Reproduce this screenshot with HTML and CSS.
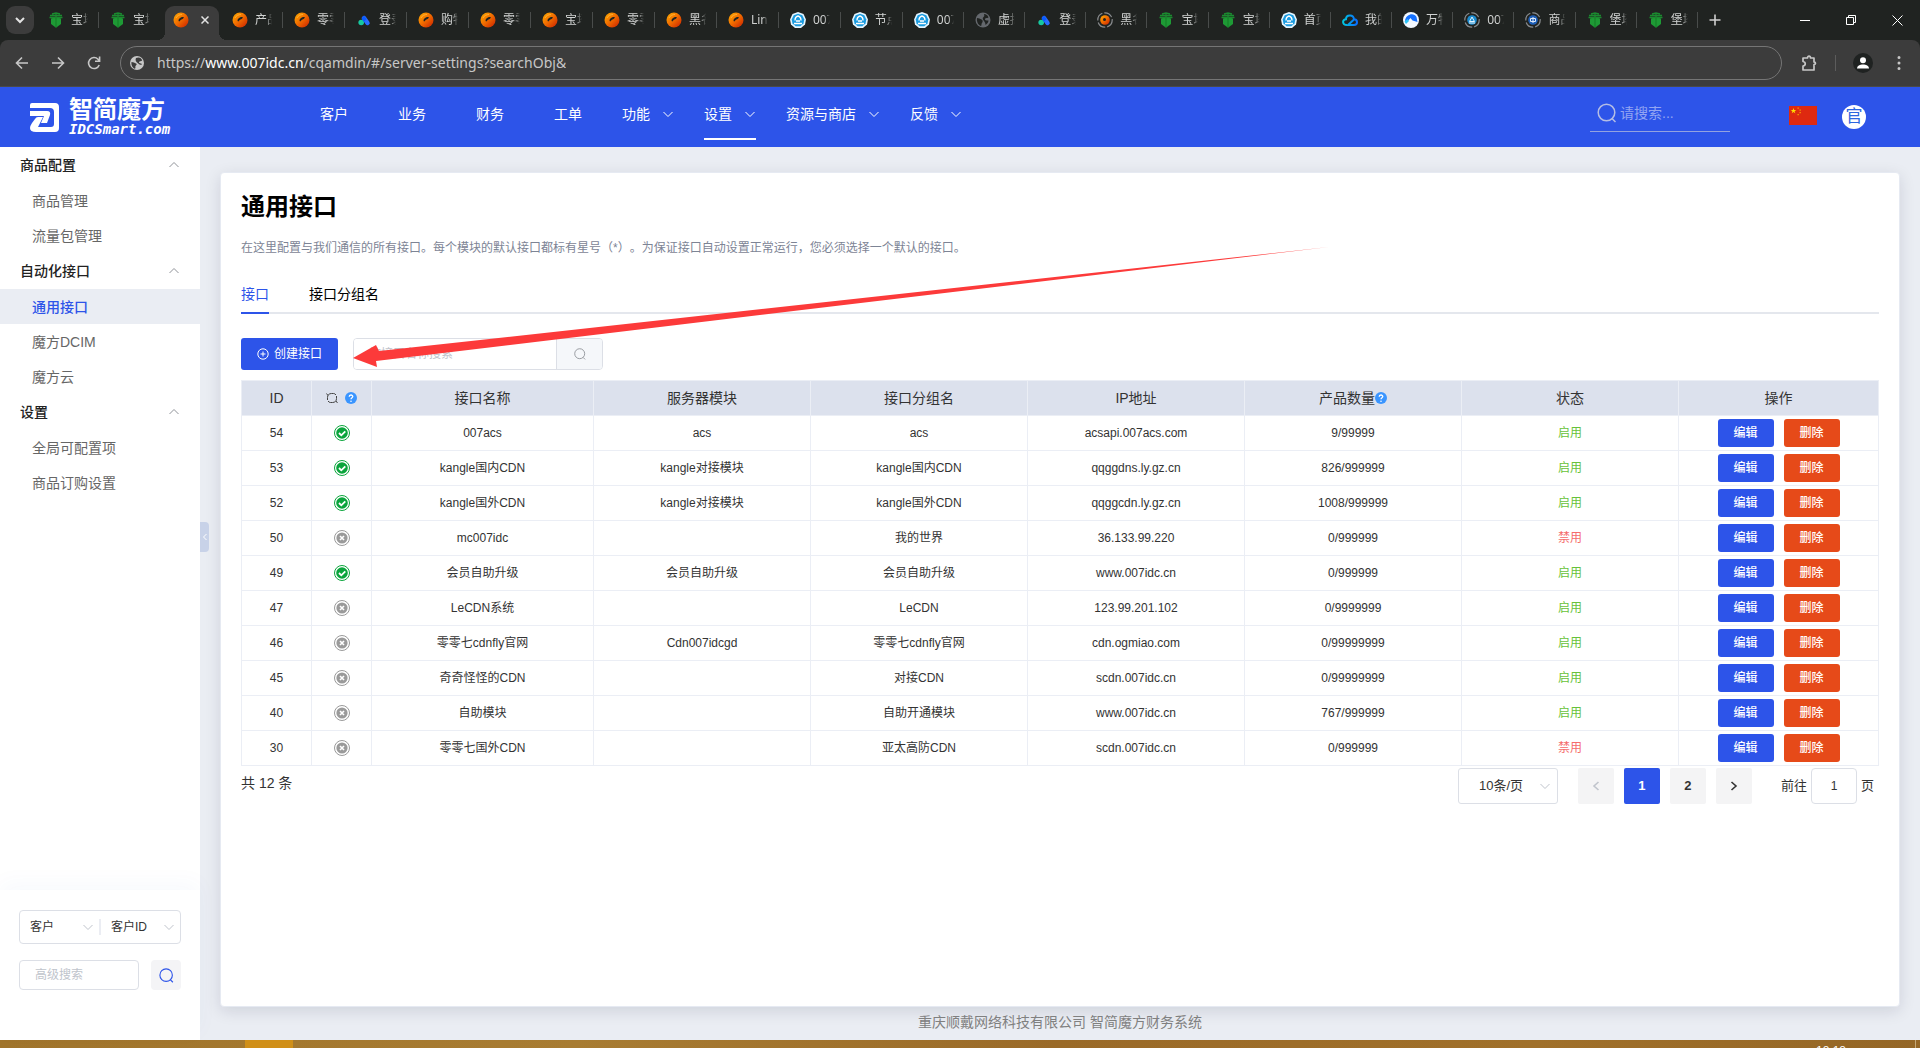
FILE: index.html
```html
<!DOCTYPE html>
<html lang="zh-CN">
<head>
<meta charset="utf-8">
<title>通用接口</title>
<link rel="stylesheet" href="styles.css">
</head>
<body>
<svg class="defs" aria-hidden="true">
  <defs>
    <linearGradient id="g-orange" x1="0" y1="0" x2="1" y2="1"><stop offset="0" stop-color="#ffb000"/><stop offset=".5" stop-color="#f06a00"/><stop offset="1" stop-color="#c81e00"/></linearGradient>
    <linearGradient id="g-cloud" x1="0" y1="0" x2="1" y2="0"><stop offset="0" stop-color="#00c8e0"/><stop offset="1" stop-color="#0a6cff"/></linearGradient>
  </defs>
  <symbol id="f-bt" viewBox="0 0 16 16"><path fill="#1e9a35" d="M3 6.500 8 5l5 1.500v5.500L8 15.800 3 12z"/><path fill="none" stroke="#1b8a30" stroke-width="1.300" d="M2 3.500h12M1.500 5.500h13M4 2l4-1 4 1M8 1v5"/><path fill="#147a26" d="M7.500 5.500h1v10h-1z"/></symbol>
  <symbol id="f-or" viewBox="0 0 16 16"><circle cx="8" cy="8" r="7.500" fill="url(#g-orange)"/><path fill="#202321" d="M5.500 8.500c0-2 3-4 5-3.500 1 .5-.5 2-2 2.500S7 9.500 6 9.500z"/><path fill="none" stroke="#ffb640" stroke-width=".8" d="M3 6c1-2.500 4-3.500 6-3.500"/></symbol>
  <symbol id="f-tri" viewBox="0 0 16 16"><path stroke="#2a6cff" stroke-width="4.500" stroke-linecap="round" d="M8 6l3.500 5"/><circle cx="5.200" cy="10.500" r="2.800" fill="#16c8a0"/><path fill="#0a5cff" d="M5.500 6.500 8 3.500l2.500 3.500L8 10z"/></symbol>
  <symbol id="f-hex" viewBox="0 0 16 16"><path fill="#e4f5ff" d="M8 0l5.500 2L16 7.500l-1 5L11 16H5l-4-3.500-1-5L2.500 2z"/><path fill="#1a9be0" d="M8 1.800l4.300 1.500 2 4.300-.8 3.900-3.200 2.800H5.700l-3.200-2.800-.8-3.900 2-4.300z"/><path fill="none" stroke="#fff" stroke-width="1.400" d="M5 8.500c0-2.500 1-4 3-4.500 2 .5 3 2 3 4.500M4 11.500h8M6 9h4"/></symbol>
  <symbol id="f-globe" viewBox="0 0 16 16"><circle cx="8" cy="8" r="7.500" fill="#64686d"/><path fill="#202321" d="M2 6c2 0 3 1 4.500 1.500S8 10 7 11s0 2-1 3C3 13 1.500 9.500 2 6zM9 2c2 0 4 1.500 4.500 3.500-1.500 1-3 0-3.500 1.500s2 1.500 3.500 1.500c0 2-2 4-3 4.500 0-1-.5-3-1.500-4S7 6 8.500 5 9 3 9 2z"/></symbol>
  <symbol id="f-ringo" viewBox="0 0 16 16"><circle cx="8" cy="8" r="7.200" fill="none" stroke="#8a8d90" stroke-width="1.200" stroke-dasharray="9 2"/><circle cx="8" cy="8" r="4.800" fill="url(#g-orange)"/><circle cx="7.500" cy="7.500" r="1.500" fill="#202321"/></symbol>
  <symbol id="f-cloud" viewBox="0 0 16 16"><path fill="none" stroke="url(#g-cloud)" stroke-width="2" d="M5 13C0 13 0 7.500 4 7.300 4 2.500 11.500 2 12 7.300c4 .2 4 5.700 0 5.700H6l6-5.500"/></symbol>
  <symbol id="f-peak" viewBox="0 0 16 16"><circle cx="8" cy="8" r="8" fill="#f2f8ff"/><path fill="#1470ff" d="M2 8.500C3 2 11 0 13.500 5l1 5-5-1.500L7.500 6 4 10z"/><path fill="#2bc4f5" d="M1.500 9.500 4.500 7 6 9l-3 3z"/></symbol>
  <symbol id="f-ringb" viewBox="0 0 16 16"><circle cx="8" cy="8" r="7.200" fill="none" stroke="#8a8d90" stroke-width="1.200" stroke-dasharray="9 2"/><circle cx="8" cy="8" r="4.800" fill="#1a8bd0"/><path fill="none" stroke="#e2f4ff" d="M5.500 9.500 8 5l2.500 4.500zM5 11h6"/></symbol>
  <symbol id="f-ringc" viewBox="0 0 16 16"><circle cx="8" cy="8" r="7.200" fill="none" stroke="#8a8d90" stroke-width="1.200" stroke-dasharray="9 2"/><circle cx="8" cy="8" r="4.800" fill="#1d5fb8"/><path fill="none" stroke="#dce9fa" d="M5.500 6.500h5v3h-5zM8 5v6"/></symbol>
  <symbol id="i-down" viewBox="0 0 12 12"><path fill="none" stroke="currentColor" d="M1.500 4 6 8.500 10.500 4"/></symbol>
  <symbol id="i-up" viewBox="0 0 12 12"><path fill="none" stroke="currentColor" d="M1.500 8 6 3.500 10.500 8"/></symbol>
  <symbol id="i-search" viewBox="0 0 20 20"><circle cx="9.500" cy="9.500" r="8.300" fill="none" stroke="currentColor" stroke-width="1.500"/><path stroke="currentColor" stroke-width="1.500" d="m15 15.500 3.500 3.500"/></symbol>
  <symbol id="i-help" viewBox="0 0 12 12"><circle cx="6" cy="6" r="6" fill="#3a95ff"/><path fill="none" stroke="#fff" stroke-width="1.300" d="M4.200 4.800c0-2.400 3.600-2.300 3.600-.2C7.800 5.800 6 5.800 6 7.300"/><circle cx="6" cy="9.200" r=".8" fill="#fff"/></symbol>
  <symbol id="i-ok" viewBox="0 0 16 16"><circle cx="8" cy="8" r="7.500" fill="#fff" stroke="#0aa53c"/><circle cx="8" cy="8" r="5.800" fill="#0aa53c"/><path fill="none" stroke="#fff" stroke-width="1.800" d="m5 8 2.300 2.300 4-4"/></symbol>
  <symbol id="i-no" viewBox="0 0 16 16"><circle cx="8" cy="8" r="7.500" fill="#fff" stroke="#9a9a9a"/><circle cx="8" cy="8" r="5.600" fill="#9a9a9a"/><path stroke="#fff" stroke-width="1.600" d="m6 6 4 4m0-4-4 4"/></symbol>
</svg>

<div class="tabstrip">
  <button class="tab-list" aria-label="搜索标签页"><svg width="10" height="10" viewBox="0 0 10 10"><path fill="none" stroke="#e3e3e3" stroke-width="2" d="m1 3 4 4 4-4"/></svg></button>
  <div class="tabs">
    <button class="tab"><svg><use href="#f-bt"/></svg><span>宝塔</span></button>
    <button class="tab plain"><svg><use href="#f-bt"/></svg><span>宝塔</span></button>
    <button class="tab active" aria-label="通用接口"><svg><use href="#f-or"/></svg><svg class="x" viewBox="0 0 8 8"><path stroke="#e3e3e3" stroke-width="1.500" d="m.5.5 7 7m0-7-7 7"/></svg></button>
    <button class="tab"><svg><use href="#f-or"/></svg><span>产品</span></button>
    <button class="tab"><svg><use href="#f-or"/></svg><span>零零</span></button>
    <button class="tab"><svg><use href="#f-tri"/></svg><span>登录</span></button>
    <button class="tab"><svg><use href="#f-or"/></svg><span>购物</span></button>
    <button class="tab"><svg><use href="#f-or"/></svg><span>零零</span></button>
    <button class="tab"><svg><use href="#f-or"/></svg><span>宝塔</span></button>
    <button class="tab"><svg><use href="#f-or"/></svg><span>零零</span></button>
    <button class="tab"><svg><use href="#f-or"/></svg><span>黑名</span></button>
    <button class="tab"><svg><use href="#f-or"/></svg><span>Linux</span></button>
    <button class="tab"><svg><use href="#f-hex"/></svg><span>007</span></button>
    <button class="tab"><svg><use href="#f-hex"/></svg><span>节点</span></button>
    <button class="tab"><svg><use href="#f-hex"/></svg><span>007</span></button>
    <button class="tab"><svg><use href="#f-globe"/></svg><span>虚拟</span></button>
    <button class="tab"><svg><use href="#f-tri"/></svg><span>登录</span></button>
    <button class="tab"><svg><use href="#f-ringo"/></svg><span>黑名</span></button>
    <button class="tab"><svg><use href="#f-bt"/></svg><span>宝塔</span></button>
    <button class="tab"><svg><use href="#f-bt"/></svg><span>宝塔</span></button>
    <button class="tab"><svg><use href="#f-hex"/></svg><span>首页</span></button>
    <button class="tab"><svg><use href="#f-cloud"/></svg><span>我的</span></button>
    <button class="tab"><svg><use href="#f-peak"/></svg><span>万物</span></button>
    <button class="tab"><svg><use href="#f-ringb"/></svg><span>007</span></button>
    <button class="tab"><svg><use href="#f-ringc"/></svg><span>商品</span></button>
    <button class="tab"><svg><use href="#f-bt"/></svg><span>堡塔</span></button>
    <button class="tab"><svg><use href="#f-bt"/></svg><span>堡塔</span></button>
  </div>
  <button class="new-tab" aria-label="新标签页"><svg width="12" height="12" viewBox="0 0 12 12"><path stroke="#d0d0d0" stroke-width="1.600" d="M6 .5v11M.5 6h11"/></svg></button>
  <div class="win">
    <button aria-label="最小化"><svg width="10" height="10" viewBox="0 0 10 10"><path stroke="#fff" d="M0 5.500h10"/></svg></button>
    <button aria-label="还原"><svg width="10" height="10" viewBox="0 0 10 10"><path fill="none" stroke="#fff" d="M.5 2.500h7v7h-7zM2.500 2.500v-2h7v7h-2"/></svg></button>
    <button aria-label="关闭"><svg width="11" height="11" viewBox="0 0 11 11"><path stroke="#fff" d="m.5.5 10 10m0-10-10 10"/></svg></button>
  </div>
</div>

<div class="toolbar-wrap"><div class="toolbar">
  <div class="nav-btns">
    <button aria-label="后退"><svg width="14" height="14" viewBox="0 0 14 14"><path fill="none" stroke="#c7c7c7" stroke-width="1.600" d="M13 7H2m5-5.500L1.500 7 7 12.500"/></svg></button>
    <button aria-label="前进"><svg width="14" height="14" viewBox="0 0 14 14"><path fill="none" stroke="#c7c7c7" stroke-width="1.600" d="M1 7h11M7 1.500 12.500 7 7 12.500"/></svg></button>
    <button aria-label="刷新"><svg width="14" height="14" viewBox="0 0 14 14"><path fill="none" stroke="#c7c7c7" stroke-width="1.600" d="M12.200 9A5.500 5.500 0 1 1 11 3.200l1.500 1.600M12.600.5v4.700H8"/></svg></button>
  </div>
  <div class="omnibox">
    <svg width="16" height="16" viewBox="0 0 16 16"><circle cx="8" cy="8" r="7" fill="#c7c7c7"/><path fill="#3c3c3c" d="M2.500 7c2 0 3 1 4.500 1.500s0 2-.5 2.500.5 2-.5 2.800C3.500 13 2 10 2.500 7zM7 3c3-1.500 5.500 0 6.200 2.500-1.200 1-2.700.5-3.200 1.500s2 1.500 3 2c-.5 1-1.500 1-2.500.5S9 8 8 7.500 6 4.500 7 3z"/></svg>
    <span class="url">https://<b>www.007idc.cn</b>/cqamdin/#/server-settings?searchObj&amp;</span>
  </div>
  <div class="tool-right">
    <button aria-label="扩展程序"><svg width="18" height="18" viewBox="0 0 18 18"><path fill="none" stroke="#c7c7c7" stroke-width="1.700" stroke-linejoin="round" d="M3 4h4.500c0-2.500 3-2.500 3 0H14v4c2 0 2 2.500 0 2.500V16H3v-4c3-.5 3-4 0-4.500z"/></svg></button>
    <i></i>
    <button aria-label="个人资料"><svg width="20" height="20" viewBox="0 0 20 20"><circle cx="10" cy="10" r="10" fill="#1f2221"/><circle cx="10" cy="7.300" r="3" fill="#fff"/><path fill="#fff" d="M4 15.500c0-5.500 12-5.500 12 0z"/></svg></button>
    <button aria-label="菜单"><svg width="4" height="16" viewBox="0 0 4 16"><path stroke="#c7c7c7" stroke-width="3" stroke-linecap="round" d="M2 2.500v0M2 8v0M2 13.500v0"/></svg></button>
  </div>
</div></div>

<header class="header">
  <a class="logo" href="#">
    <svg width="29" height="29" viewBox="0 0 29 29"><path fill="#fff" d="M2 0h23q4 0 4 4v21q0 4-4 4H6q-6 0-6-4 0-2 2-5l3-4q1-2 3-2h5L8 24h13q3 0 3-3V9q0-4-4-4H0V2q0-2 2-2zM0 8h17q4 0 3 4l-3 8h-6l3-7H0z"/></svg>
    <span class="brand"><strong>智简魔方</strong><em>IDCSmart.com</em></span>
  </a>
  <nav class="menu">
    <a href="#">客户</a><a href="#">业务</a><a href="#">财务</a><a href="#">工单</a>
    <a href="#" class="sub">功能<svg><use href="#i-down"/></svg></a>
    <a href="#" class="sub current">设置<svg><use href="#i-down"/></svg></a>
    <a href="#" class="sub">资源与商店<svg><use href="#i-down"/></svg></a>
    <a href="#" class="sub">反馈<svg><use href="#i-down"/></svg></a>
  </nav>
  <label class="top-search"><svg width="20" height="20"><use href="#i-search"/></svg><input type="text" placeholder="请搜索..." aria-label="搜索"></label>
  <button class="flag" aria-label="语言"><svg width="28" height="19" viewBox="0 0 28 19"><path fill="#de2910" d="M0 0h28v19H0z"/><path fill="#ffde00" d="m4.500 2 .7 2h2.100L5.600 5.200l.7 2-1.800-1.200-1.800 1.200.7-2L1.700 4h2.100z"/><path fill="#f5a000" d="M8.500 1.500h1.300v1.300H8.500zM10.500 3.500h1.300v1.300h-1.300zM10.500 6h1.300v1.300h-1.300zM8.500 8h1.300v1.300H8.500z"/></svg></button>
  <button class="avatar">官</button>
</header>

<div class="body">
  <aside class="side">
    <nav>
      <h3>商品配置<svg><use href="#i-up"/></svg></h3>
      <a href="#">商品管理</a>
      <a href="#">流量包管理</a>
      <h3>自动化接口<svg><use href="#i-up"/></svg></h3>
      <a href="#" class="on">通用接口</a>
      <a href="#">魔方DCIM</a>
      <a href="#">魔方云</a>
      <h3>设置<svg><use href="#i-up"/></svg></h3>
      <a href="#">全局可配置项</a>
      <a href="#">商品订购设置</a>
    </nav>
    <form class="quick">
      <div class="pair">
        <div class="pick"><select aria-label="类型"><option>客户</option></select><svg><use href="#i-down"/></svg></div>
        <i></i>
        <div class="pick"><select aria-label="字段"><option>客户ID</option></select><svg><use href="#i-down"/></svg></div>
      </div>
      <div class="find">
        <input type="text" placeholder="高级搜索" aria-label="高级搜索">
        <button type="button" aria-label="搜索"><svg width="15" height="15"><use href="#i-search"/></svg></button>
      </div>
    </form>
    <button class="fold" aria-label="收起"><svg width="6" height="8" viewBox="0 0 6 8"><path fill="none" stroke="#fff" d="M4.500 1 1.500 4l3 3"/></svg></button>
  </aside>

  <main class="main">
    <section class="card">
      <h1>通用接口</h1>
      <p class="desc">在这里配置与我们通信的所有接口。每个模块的默认接口都标有星号（*）。为保证接口自动设置正常运行，您必须选择一个默认的接口。</p>
      <div class="subtabs"><a href="#" class="on">接口</a><a href="#">接口分组名</a></div>
      <div class="actions">
        <button class="create"><svg width="12" height="12" viewBox="0 0 12 12"><circle cx="6" cy="6" r="5.200" fill="none" stroke="#fff"/><path stroke="#fff" d="M6 3.500v5M3.500 6h5"/></svg>创建接口</button>
        <div class="lookup"><input type="text" placeholder="按接口名称搜索" aria-label="按接口名称搜索"><button aria-label="搜索"><svg width="12" height="12"><use href="#i-search"/></svg></button></div>
      </div>
      <table>
        <colgroup><col class="c-id"><col class="c-st"><col class="c-name"><col><col><col><col><col><col class="c-op"></colgroup>
        <thead><tr>
          <th>ID</th>
          <th><span class="heads"><svg width="12" height="12" viewBox="0 0 12 12"><path fill="none" stroke="#444" d="M1.500 8V5.500C1.500 3 3 1.500 5.500 1.500h2q1.500 0 2.500 1.500M10.500 4v2.500c0 2.500-1.500 4-4 4h-2Q3 10.500 2 9M.5 1.500 2 3.500M11.500 11 10 9"/></svg><svg width="12" height="12"><use href="#i-help"/></svg></span></th>
          <th>接口名称</th><th>服务器模块</th><th>接口分组名</th><th>IP地址</th>
          <th><span class="counts">产品数量<svg width="12" height="12"><use href="#i-help"/></svg></span></th>
          <th>状态</th><th>操作</th>
        </tr></thead>
        <tbody>
          <tr><td>54</td><td><svg class="st"><use href="#i-ok"/></svg></td><td>007acs</td><td>acs</td><td>acs</td><td>acsapi.007acs.com</td><td>9/99999</td><td class="yes">启用</td><td><div class="ops"><button>编辑</button><button class="del">删除</button></div></td></tr>
          <tr><td>53</td><td><svg class="st"><use href="#i-ok"/></svg></td><td>kangle国内CDN</td><td>kangle对接模块</td><td>kangle国内CDN</td><td>qqggdns.ly.gz.cn</td><td>826/999999</td><td class="yes">启用</td><td><div class="ops"><button>编辑</button><button class="del">删除</button></div></td></tr>
          <tr><td>52</td><td><svg class="st"><use href="#i-ok"/></svg></td><td>kangle国外CDN</td><td>kangle对接模块</td><td>kangle国外CDN</td><td>qqggcdn.ly.gz.cn</td><td>1008/999999</td><td class="yes">启用</td><td><div class="ops"><button>编辑</button><button class="del">删除</button></div></td></tr>
          <tr><td>50</td><td><svg class="st"><use href="#i-no"/></svg></td><td>mc007idc</td><td></td><td>我的世界</td><td>36.133.99.220</td><td>0/999999</td><td class="off">禁用</td><td><div class="ops"><button>编辑</button><button class="del">删除</button></div></td></tr>
          <tr><td>49</td><td><svg class="st"><use href="#i-ok"/></svg></td><td>会员自助升级</td><td>会员自助升级</td><td>会员自助升级</td><td>www.007idc.cn</td><td>0/999999</td><td class="yes">启用</td><td><div class="ops"><button>编辑</button><button class="del">删除</button></div></td></tr>
          <tr><td>47</td><td><svg class="st"><use href="#i-no"/></svg></td><td>LeCDN系统</td><td></td><td>LeCDN</td><td>123.99.201.102</td><td>0/9999999</td><td class="yes">启用</td><td><div class="ops"><button>编辑</button><button class="del">删除</button></div></td></tr>
          <tr><td>46</td><td><svg class="st"><use href="#i-no"/></svg></td><td>零零七cdnfly官网</td><td>Cdn007idcgd</td><td>零零七cdnfly官网</td><td>cdn.ogmiao.com</td><td>0/99999999</td><td class="yes">启用</td><td><div class="ops"><button>编辑</button><button class="del">删除</button></div></td></tr>
          <tr><td>45</td><td><svg class="st"><use href="#i-no"/></svg></td><td>奇奇怪怪的CDN</td><td></td><td>对接CDN</td><td>scdn.007idc.cn</td><td>0/99999999</td><td class="yes">启用</td><td><div class="ops"><button>编辑</button><button class="del">删除</button></div></td></tr>
          <tr><td>40</td><td><svg class="st"><use href="#i-no"/></svg></td><td>自助模块</td><td></td><td>自助开通模块</td><td>www.007idc.cn</td><td>767/999999</td><td class="yes">启用</td><td><div class="ops"><button>编辑</button><button class="del">删除</button></div></td></tr>
          <tr><td>30</td><td><svg class="st"><use href="#i-no"/></svg></td><td>零零七国外CDN</td><td></td><td>亚太高防CDN</td><td>scdn.007idc.cn</td><td>0/999999</td><td class="off">禁用</td><td><div class="ops"><button>编辑</button><button class="del">删除</button></div></td></tr>
        </tbody>
      </table>
      <div class="pager">
        <span class="total">共 12 条</span>
        <div class="pick size"><select aria-label="每页条数"><option>10条/页</option></select><svg><use href="#i-down"/></svg></div>
        <div class="pages">
          <button disabled aria-label="上一页"><svg width="8" height="12" viewBox="0 0 8 12"><path fill="none" stroke="#c0c4cc" stroke-width="1.600" d="M6.500 2 2 6l4.500 4"/></svg></button>
          <button class="on">1</button>
          <button>2</button>
          <button aria-label="下一页"><svg width="8" height="12" viewBox="0 0 8 12"><path fill="none" stroke="#333" stroke-width="1.600" d="M1.500 2 6 6l-4.500 4"/></svg></button>
        </div>
        <label class="jump">前往<input type="text" value="1">页</label>
      </div>
    </section>
    <footer>重庆顺戴网络科技有限公司 智简魔方财务系统</footer>
  </main>
</div>

<div class="taskbar"><span class="task"></span><span class="clock">18:18</span></div>

<svg class="arrow" width="976" height="121" viewBox="0 0 976 121" aria-hidden="true"><path fill="#fc3a3a" d="M0 111 23 98l3 6L976 0 23 114l1 6z"/></svg>
</body>
</html>
```

FILE: styles.css
```css
* { box-sizing: border-box; }
body {
  margin: 0;
  min-height: 100vh;
  display: flex;
  flex-direction: column;
  position: relative;
  overflow-x: hidden;
  font-family: "Liberation Sans", "Noto Sans CJK SC", sans-serif;
  font-size: 14px;
  line-height: 20px;
  color: #333;
  background: #eaedf3;
}
a { color: inherit; text-decoration: none; }
button, input, select { font: inherit; color: inherit; margin: 0; }
button { border: 0; padding: 0; background: none; cursor: pointer; display: flex; align-items: center; justify-content: center; }
svg { display: block; flex: none; }
.defs { position: absolute; width: 0; height: 0; }

/* browser tab strip */
.tabstrip { height: 40px; background: #202321; display: flex; align-items: center; font-family: "Noto Sans", "Noto Sans CJK SC", sans-serif; }
.tab-list { width: 28px; height: 28px; margin: 0 3px 0 6px; border-radius: 9px; background: #3c3c3c; flex: none; }
.tabs { flex: 1; display: flex; height: 40px; align-items: flex-end; min-width: 0; }
.tab { flex: 61 1 0; min-width: 0; height: 34px; padding: 0 0 6px 11px; justify-content: flex-start; gap: 7px; position: relative; color: #d0d2d1; font-size: 12px; line-height: 16px; }
.tab:nth-child(-n+14) { flex-grow: 62; }
.tab svg { width: 16px; height: 16px; }
.tab span { width: 17px; overflow: hidden; white-space: nowrap; text-align: left; -webkit-mask-image: linear-gradient(90deg, #000 65%, transparent); mask-image: linear-gradient(90deg, #000 65%, transparent); }
.tab::after { content: ""; position: absolute; right: 0; top: 6px; width: 1px; height: 16px; background: #494c4b; }
.tab.plain::after { display: none; }
.tab.active { flex-grow: 56; margin: 0 2px 0 4px; padding-left: 8px; gap: 12px; border-radius: 9px 9px 0 0; background: #3c3c3c; }
.tab.active .x { width: 8px; height: 8px; }
.tab.active::before, .tab.active::after { content: ""; position: absolute; top: auto; bottom: 0; width: 8px; height: 8px; }
.tab.active::before { left: -8px; background: radial-gradient(circle at 0 0, transparent 8px, #3c3c3c 8px); }
.tab.active::after { right: -8px; background: radial-gradient(circle at 100% 0, transparent 8px, #3c3c3c 8px); }
.new-tab { width: 34px; height: 34px; }
.win { display: flex; margin-left: 50px; }
.win button { width: 46px; height: 40px; }

/* address bar */
.toolbar-wrap { background: #202321; }
.toolbar { height: 47px; padding: 0 15px 0 4px; display: flex; align-items: center; background: #3c3c3c; border-bottom: 1px solid #4a4a48; border-radius: 8px 8px 0 0; }
.nav-btns { display: flex; width: 116px; }
.nav-btns button { width: 36px; height: 34px; }
.omnibox { flex: 1; height: 34px; padding: 0 8px; border: 1px solid #757575; border-radius: 17px; display: flex; align-items: center; gap: 12px; min-width: 0; }
.url { font-family: "Noto Sans", sans-serif; font-size: 14px; color: #c7c7c7; white-space: nowrap; overflow: hidden; }
.url b { font-weight: 400; color: #fff; }
.tool-right { display: flex; align-items: center; padding-left: 18px; }
.tool-right i { width: 1px; height: 16px; margin: 0 17px; background: #5c5c5c; }
.tool-right button:last-child { margin: 0 4px 0 24px; }

/* site header */
.header { height: 60px; padding: 0 54px 0 30px; display: flex; align-items: center; background: #2d54e9; color: #fff; }
.logo { display: flex; align-items: center; gap: 10px; width: 265px; }
.brand { display: flex; flex-direction: column; gap: 2px; }
.brand strong { font-size: 24px; line-height: 22px; }
.brand em { font: italic bold 14px/12px "DejaVu Sans Mono", monospace; }
.menu { flex: 1; display: flex; align-self: stretch; }
.menu a { margin: 0 25px; height: 53px; display: flex; align-items: center; white-space: nowrap; border-top: 2px solid transparent; border-bottom: 2px solid transparent; }
.menu .sub { margin: 0 15px; gap: 12px; }
.menu svg { width: 12px; height: 12px; }
.menu .current { border-bottom-color: #fff; }
.top-search { width: 140px; height: 32px; margin-bottom: 3px; padding: 0 6px 4px 7px; display: flex; align-items: center; gap: 3px; color: #b4bde4; border-bottom: 1px solid #93a2e0; }
.top-search input { width: 100px; padding: 0; border: 0; outline: 0; background: none; }
.top-search input::placeholder { color: #93a5f2; }
.flag { margin: 0 25px 4px 59px; }
.avatar { width: 24px; height: 24px; border-radius: 50%; background: #fff; color: #2d66e0; font-size: 17px; line-height: 24px; }

/* sidebar */
.body { flex: 1; display: flex; }
.side { width: 200px; flex: none; display: flex; flex-direction: column; justify-content: space-between; background: #fff; position: relative; }
.side h3 { margin: 0; height: 36px; padding: 0 20px; display: flex; align-items: center; justify-content: space-between; font-size: 14px; font-weight: 500; color: #222; }
.side h3 svg { width: 12px; height: 12px; color: #909399; }
.side nav a { display: flex; align-items: center; height: 35px; padding-left: 32px; color: #666; }
.side nav a.on { background: #eaedf3; color: #2d54e9; font-weight: 500; }
.quick { padding: 20px 19px 50px; box-shadow: 0 -8px 20px rgba(45, 84, 180, .03); font-size: 12px; }
.pair { height: 34px; display: flex; align-items: center; border: 1px solid #dcdfe6; border-radius: 4px; }
.pair i { width: 2px; height: 16px; background: #ebedf3; }
.pick { flex: 1; display: grid; align-items: center; min-width: 0; }
.pick select { grid-area: 1 / 1; width: 100%; height: 30px; padding: 0 10px; border: 0; outline: 0; background: none; appearance: none; }
.pick svg { grid-area: 1 / 1; justify-self: end; width: 12px; height: 12px; margin-right: 5px; color: #c0c4cc; pointer-events: none; }
.find { margin-top: 16px; display: flex; justify-content: space-between; align-items: center; }
.find input { width: 120px; height: 30px; padding: 0 15px; border: 1px solid #dcdfe6; border-radius: 4px; }
.find button { width: 30px; height: 30px; border-radius: 4px; background: #f4f4f6; color: #2d54e9; }
input::placeholder { color: #c0c4cc; }
.fold { position: absolute; left: 200px; top: 375px; width: 9px; height: 30px; background: #c8d2e8; border-radius: 0 4px 4px 0; }

/* content */
.main { flex: 1; min-width: 0; padding: 25px 20px 0; display: flex; flex-direction: column; }
.card { flex: 1; padding: 15px 20px; background: #fff; border: 1px solid #e6eaf2; border-radius: 4px; box-shadow: 0 4px 16px rgba(0, 20, 50, .12); }
h1 { margin: 0; font-size: 24px; line-height: 38px; color: #000; }
.desc { margin: 12px 0 0; font-size: 12px; line-height: 20px; color: #7d8495; text-spacing-trim: space-all; }
.subtabs { margin-top: 18px; display: flex; gap: 40px; border-bottom: 2px solid #e4e7ed; color: #000; }
.subtabs a { height: 38px; line-height: 36px; margin-bottom: -2px; border-bottom: 2px solid transparent; }
.subtabs a.on { color: #2d54e9; border-color: #2d54e9; }
.actions { margin: 24px 0 10px; display: flex; gap: 15px; font-size: 12px; }
.create { width: 97px; height: 32px; gap: 5px; border-radius: 3px; background: #2d54e9; color: #fff; }
.lookup { width: 250px; height: 32px; display: flex; border: 1px solid #dcdfe6; border-radius: 4px; overflow: hidden; }
.lookup input { flex: 1; min-width: 0; border: 0; padding: 0 15px; outline: 0; }
.lookup button { width: 46px; border-left: 1px solid #dcdfe6; background: #f5f7fa; color: #909399; }

table { width: 100%; table-layout: fixed; border-collapse: collapse; font-size: 12px; }
.c-id { width: 70px; }
.c-st { width: 60px; }
.c-name { width: 222px; }
.c-op { width: 200px; }
th, td { height: 35px; padding: 0; text-align: center; border: 1px solid #ebeef5; }
th { font-size: 14px; font-weight: 400; background: #dce1ed; color: #333; }
.heads, .counts, .ops { display: flex; align-items: center; justify-content: center; }
.heads { gap: 7px; }
.ops { gap: 10px; }
.st { width: 16px; height: 16px; margin: 0 auto; }
.yes { color: #67c23a; }
.off { color: #f56c6c; }
.ops button { width: 56px; height: 28px; border-radius: 3px; background: #2d54e9; color: #fff; font-weight: 500; }
.ops .del { background: #e64a19; }

.pager { display: flex; align-items: center; padding: 2px 5px 0 0; }
.total { flex: 1; margin-bottom: 6px; }
.size { flex: none; width: 100px; height: 36px; border: 1px solid #dcdfe6; border-radius: 3px; font-size: 13px; }
.size select { padding: 0 20px; }
.size svg { margin-right: 6px; }
.pages { display: flex; gap: 10px; margin: 0 29px 0 20px; font-size: 13px; font-weight: 700; }
.pages button { width: 36px; height: 36px; border-radius: 2px; background: #f4f4f5; }
.pages .on { background: #2d54e9; color: #fff; }
.jump { display: flex; align-items: center; gap: 4px; font-size: 13px; }
.jump input { width: 46px; height: 36px; border: 1px solid #dcdfe6; border-radius: 4px; text-align: center; font-size: 12px; }
footer { height: 33px; line-height: 31px; text-align: center; color: #808080; }

/* desktop taskbar */
.taskbar { height: 8px; overflow: hidden; display: flex; justify-content: space-between; background: linear-gradient(90deg, #a0742b, #a87c32 30%, #9a6a28 55%, #a0702a 80%, #946626); }
.task { width: 48px; margin-left: 245px; background: #d08f18; }
.clock { margin-right: 4px; padding: 3px 69px 0 0; border-right: 1px solid #c4a878; color: #fff; font-size: 12px; line-height: 16px; }

/* hand-drawn pointer over the page */
.arrow { position: absolute; left: 353px; top: 247px; pointer-events: none; }
```
